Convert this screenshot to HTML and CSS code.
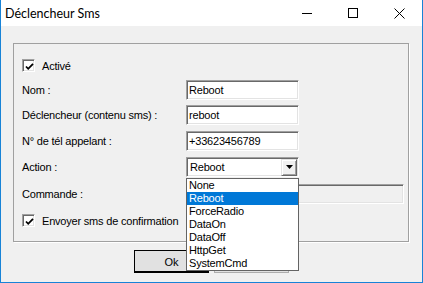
FILE: index.html
```html
<!DOCTYPE html>
<html lang="fr">
<head>
    <meta charset="UTF-8">
    <title>Déclencheur Sms</title>
    <link rel="stylesheet" href="styles.css">
</head>
<body>
    <div class="window">
        <div class="titlebar">
            <span class="title">Déclencheur Sms</span>
            <span class="caption-btn">
                <svg width="10" height="10" viewBox="0 0 10 10"><path d="M0 5.5H10" stroke="#000" stroke-width="1"/></svg>
            </span>
            <span class="caption-btn">
                <svg width="10" height="10" viewBox="0 0 10 10"><rect x="0.5" y="0.5" width="9" height="9" fill="none" stroke="#000" stroke-width="1"/></svg>
            </span>
            <span class="caption-btn">
                <svg width="11" height="11" viewBox="0 0 11 11"><path d="M0.5 0.5L10.5 10.5M10.5 0.5L0.5 10.5" stroke="#000" stroke-width="1"/></svg>
            </span>
        </div>

        <div class="client">
            <div class="group">
                <div class="check-row">
                    <span class="checkbox">
                        <svg width="9" height="9" viewBox="0 0 9 9"><path d="M1 4.5L3.2 6.8L8 1.8" fill="none" stroke="#000" stroke-width="1.8"/></svg>
                    </span>
                    <span>Activé</span>
                </div>

                <div class="form-grid">
                    <label>Nom :</label>
                    <div class="textbox">Reboot</div>

                    <label>Déclencheur (contenu sms) :</label>
                    <div class="textbox">reboot</div>

                    <label>N° de tél appelant :</label>
                    <div class="textbox">+33623456789</div>

                    <label>Action :</label>
                    <div class="combo">
                        <span class="combo-text">Reboot</span>
                        <span class="combo-btn">
                            <svg width="7" height="4" viewBox="0 0 7 4"><path d="M0 0H7L3.5 4Z" fill="#000"/></svg>
                        </span>
                    </div>

                    <label>Commande :</label>
                    <div class="textbox wide disabled"></div>
                </div>

                <div class="check-row confirm">
                    <span class="checkbox">
                        <svg width="9" height="9" viewBox="0 0 9 9"><path d="M1 4.5L3.2 6.8L8 1.8" fill="none" stroke="#000" stroke-width="1.8"/></svg>
                    </span>
                    <span>Envoyer sms de confirmation</span>
                </div>
            </div>

            <div class="button-row">
                <button class="btn default">Ok</button>
                <!-- second button sits under the open list -->
                <button class="btn"></button>
            </div>

            <ul class="dropdown">
                <li>None</li>
                <li class="selected">Reboot</li>
                <li>ForceRadio</li>
                <li>DataOn</li>
                <li>DataOff</li>
                <li>HttpGet</li>
                <li>SystemCmd</li>
            </ul>
        </div>
    </div>
</body>
</html>
```

FILE: styles.css
```css
body {
    margin: 0;
    padding: 0;
    background-color: #f0f0f0;
}
.window {
    width: 423px;
    height: 283px;
    box-sizing: border-box;
    border: 1px solid #1883d7;
    border-top: none;
    background-color: #f0f0f0;
    display: flex;
    flex-direction: column;
    overflow: hidden;
}
.titlebar {
    height: 26px;
    flex: none;
    background-color: #fff;
    display: flex;
    align-items: center;
}
.title {
    flex: 1;
    padding-left: 4px;
    font-family: "Segoe UI", Lato, "Noto Sans", sans-serif;
    font-size: 12.5px;
    color: #000;
}
.caption-btn {
    width: 46px;
    height: 26px;
    display: flex;
    align-items: center;
    justify-content: center;
}
.client {
    position: relative;
    flex: 1;
    padding: 17px 0 0 12px;
    font-family: "Liberation Sans", Arial, sans-serif;
    font-size: 11px;
    letter-spacing: -0.2px;
    color: #000;
}
.group {
    width: 396px;
    height: 199px;
    box-sizing: border-box;
    border: 1px solid #a0a0a0;
    box-shadow: 1px 1px 0 #fff;
    padding: 15px 0 0 8px;
}
.check-row {
    display: flex;
    align-items: center;
    gap: 7px;
    height: 13px;
}
.checkbox {
    width: 13px;
    height: 13px;
    box-sizing: border-box;
    background-color: #fff;
    border: 1px solid;
    border-color: #a0a0a0 #fff #fff #a0a0a0;
    box-shadow: inset 1px 1px 0 #696969, inset -1px -1px 0 #e3e3e3;
    display: flex;
    align-items: center;
    justify-content: center;
}
.checkbox svg {
    margin: 1px 0 0 1px;
}
.form-grid {
    display: grid;
    grid-template-columns: 164px auto;
    grid-template-rows: 25px 26px 26px 27px 20px;
    margin-top: 8px;
    align-items: start;
}
.form-grid label {
    line-height: 20px;
    height: 20px;
    white-space: nowrap;
}
.textbox {
    width: 113px;
    height: 20px;
    box-sizing: border-box;
    background-color: #fff;
    border: 1px solid;
    border-color: #a0a0a0 #fff #fff #a0a0a0;
    box-shadow: inset 1px 1px 0 #696969, inset -1px -1px 0 #e3e3e3;
    padding: 0 0 0 2px;
    line-height: 18px;
    white-space: nowrap;
}
.textbox.wide {
    width: 218px;
}
.textbox.disabled {
    background-color: #f0f0f0;
}
.combo {
    width: 113px;
    height: 20px;
    box-sizing: border-box;
    background-color: #fff;
    border: 1px solid;
    border-color: #a0a0a0 #fff #fff #a0a0a0;
    box-shadow: inset 1px 1px 0 #696969, inset -1px -1px 0 #e3e3e3;
    display: flex;
    align-items: center;
    padding: 1px 2px 1px 3px;
}
.combo-text {
    flex: 1;
    line-height: 18px;
}
.combo-btn {
    width: 16px;
    height: 17px;
    box-sizing: border-box;
    background-color: #f0f0f0;
    border: 1px solid;
    border-color: #e3e3e3 #696969 #696969 #e3e3e3;
    box-shadow: inset 1px 1px 0 #fff, inset -1px -1px 0 #a0a0a0;
    display: flex;
    align-items: center;
    justify-content: center;
    margin-right: -1px;
}
.confirm {
    margin-top: 10px;
}
.button-row {
    display: flex;
    gap: 5px;
    margin: 8px 0 0 121px;
}
.btn {
    width: 75px;
    height: 23px;
    box-sizing: border-box;
    background-color: #e1e1e1;
    border: 1px solid #adadad;
    font-family: "Liberation Sans", Arial, sans-serif;
    font-size: 11px;
    color: #000;
    padding: 0;
}
.btn.default {
    border: 1px solid #000;
    box-shadow: inset 0 -1px 0 #000;
}
.dropdown {
    position: absolute;
    left: 185px;
    top: 152px;
    width: 113px;
    box-sizing: border-box;
    margin: 0;
    padding: 0;
    list-style: none;
    background-color: #fff;
    border: 1px solid #646464;
}
.dropdown li {
    height: 13px;
    line-height: 13px;
    padding-left: 2px;
}
.dropdown li.selected {
    background-color: #0078d7;
    color: #fff;
}
```
